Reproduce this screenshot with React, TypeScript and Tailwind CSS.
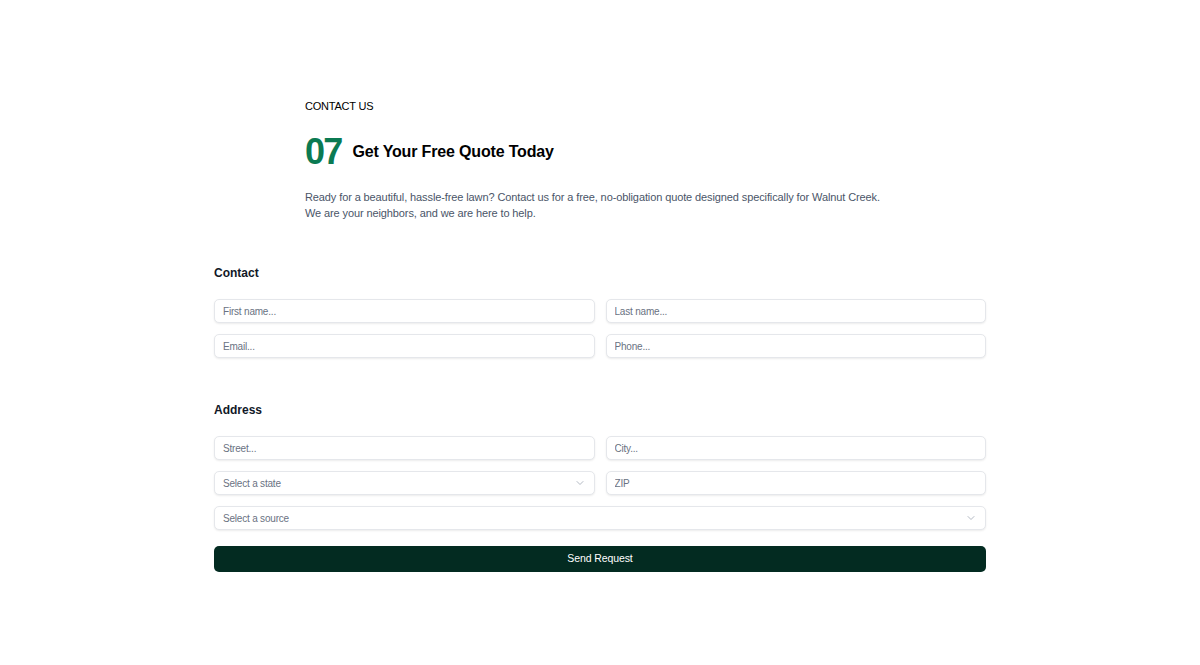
import { ChevronDown } from 'lucide-react';

function Field({ placeholder }: { placeholder: string }) {
  return (
    <input
      placeholder={placeholder}
      className="h-6 w-full rounded-[5px] border border-gray-200 bg-white px-2 text-[10px] tracking-[-0.02em] text-gray-800 shadow-[0_1px_2px_rgba(0,0,0,0.08)] outline-none placeholder:text-gray-500"
    />
  );
}

function SelectBox({ label }: { label: string }) {
  return (
    <button className="flex h-6 w-full items-center justify-between rounded-[5px] border border-gray-200 bg-white px-2 text-left text-[10px] tracking-[-0.02em] text-gray-500 shadow-[0_1px_2px_rgba(0,0,0,0.08)]">
      <span>{label}</span>
      <ChevronDown className="h-3 w-3 text-gray-400" strokeWidth={1.5} />
    </button>
  );
}

export default function App() {
  return (
    <div className="min-h-[665px] bg-white font-['Liberation_Sans',Arial,sans-serif] text-gray-900">
      <div className="mx-auto w-[772px] pt-[98px]">
        {/* Heading */}
        <div className="mx-auto w-[590px]">
          <p className="text-[11px] leading-4 tracking-[-0.02em] text-black">CONTACT US</p>
          <div className="mt-[20px] flex items-center gap-[11px]">
            <span className="text-[36px] font-bold leading-none tracking-[-0.05em] text-[#0b7a52]">07</span>
            <h2 className="text-[16px] font-bold tracking-[-0.01em] text-black">Get Your Free Quote Today</h2>
          </div>
          <p className="mt-[19px] text-[11px] leading-4 tracking-[-0.01em] text-[#4a5568]">
            Ready for a beautiful, hassle-free lawn? Contact us for a free, no-obligation quote designed specifically for Walnut Creek. We are your neighbors, and we are here to help.
          </p>
        </div>

        {/* Contact */}
        <h3 className="mt-[44px] text-[12px] font-bold leading-4 text-[#111827]">Contact</h3>
        <div className="mt-[18px] grid grid-cols-2 gap-[11px]">
          <Field placeholder="First name..." />
          <Field placeholder="Last name..." />
          <Field placeholder="Email..." />
          <Field placeholder="Phone..." />
        </div>

        {/* Address */}
        <h3 className="mt-[44px] text-[12px] font-bold leading-4 text-[#111827]">Address</h3>
        <div className="mt-[18px] grid grid-cols-2 gap-[11px]">
          <Field placeholder="Street..." />
          <Field placeholder="City..." />
          <SelectBox label="Select a state" />
          <Field placeholder="ZIP" />
          <div className="col-span-2">
            <SelectBox label="Select a source" />
          </div>
        </div>

        <button className="mt-[16px] h-[26px] w-full rounded-[5px] bg-[#032b21] text-[10.5px] tracking-[-0.01em] text-white">
          Send Request
        </button>
      </div>
    </div>
  );
}
